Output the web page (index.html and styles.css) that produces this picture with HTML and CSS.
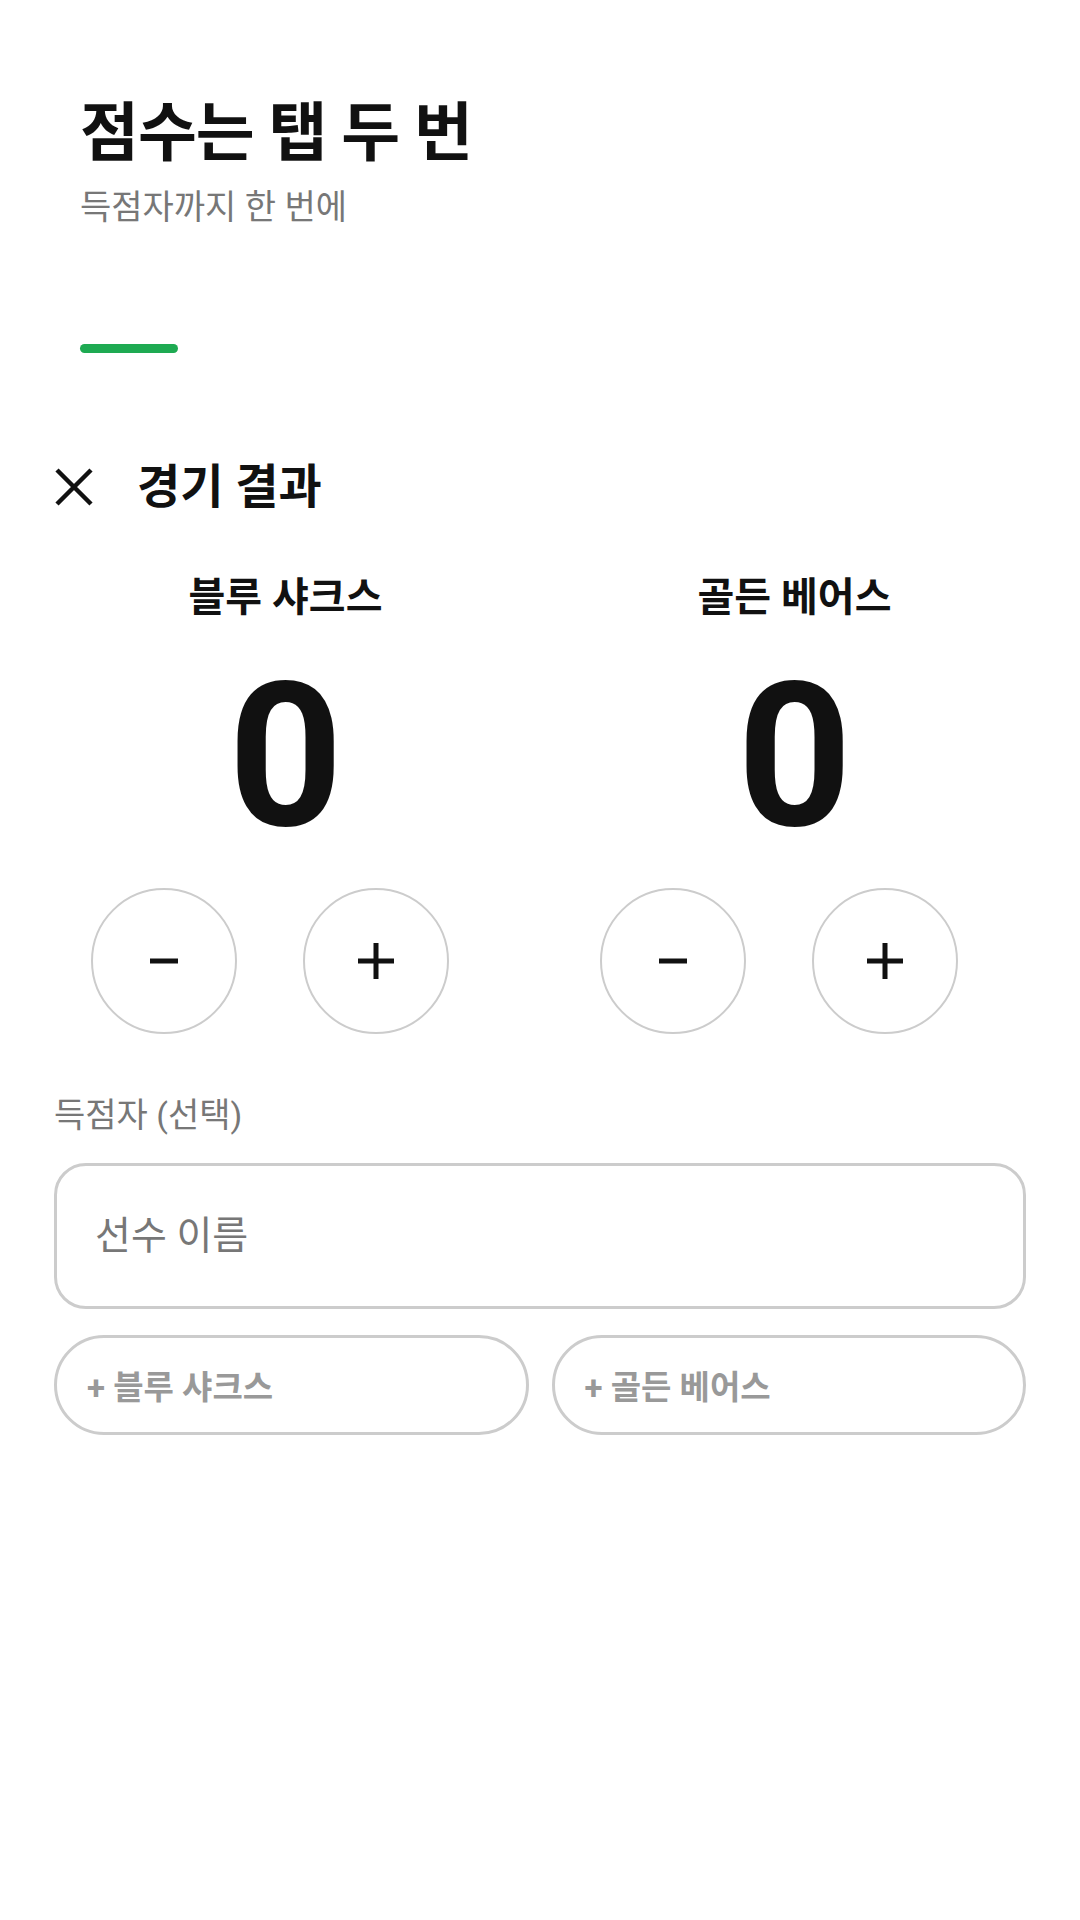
FILE: index.html
```html
<!DOCTYPE html>
<html lang="ko">

<head>
    <meta charset="UTF-8">
    <meta name="viewport" content="width=device-width, initial-scale=1.0">
    <title>점수는 탭 두 번</title>
    <link rel="stylesheet" href="styles.css">
</head>

<body>
    <div class="intro">
        <h1>점수는 탭 두 번</h1>
        <p class="sub">득점자까지 한 번에</p>
        <div class="bar"></div>
    </div>

    <div class="sheet">
        <div class="sheet-head">
            <button class="close" aria-label="닫기">
                <svg width="40" height="40" viewBox="0 0 40 40">
                    <path d="M3 3 L37 37 M37 3 L3 37" stroke="#111" stroke-width="4.5" fill="none" />
                </svg>
            </button>
            <h2>경기 결과</h2>
        </div>

        <div class="teams">
            <div class="team">
                <div class="name">블루 샤크스</div>
                <div class="score">0</div>
                <div class="btns">
                    <button class="round" aria-label="빼기">
                        <svg width="36" height="36" viewBox="0 0 36 36"><path d="M4 18 H32" stroke="#111" stroke-width="5" /></svg>
                    </button>
                    <button class="round" aria-label="더하기">
                        <svg width="36" height="36" viewBox="0 0 36 36"><path d="M0 18 H36 M18 0 V36" stroke="#111" stroke-width="5" /></svg>
                    </button>
                </div>
            </div>
            <div class="team">
                <div class="name">골든 베어스</div>
                <div class="score">0</div>
                <div class="btns">
                    <button class="round" aria-label="빼기">
                        <svg width="36" height="36" viewBox="0 0 36 36"><path d="M4 18 H32" stroke="#111" stroke-width="5" /></svg>
                    </button>
                    <button class="round" aria-label="더하기">
                        <svg width="36" height="36" viewBox="0 0 36 36"><path d="M0 18 H36 M18 0 V36" stroke="#111" stroke-width="5" /></svg>
                    </button>
                </div>
            </div>
        </div>

        <div class="label">득점자 (선택)</div>
        <input class="player" type="text" placeholder="선수 이름">
        <div class="quick">
            <button class="pill">+ 블루 샤크스</button>
            <button class="pill">+ 골든 베어스</button>
        </div>
    </div>
</body>

</html>
```

FILE: styles.css
```css
body {
    margin: 0;
    background: #fff;
    color: #111;
    font-family: Roboto, "Noto Sans CJK KR", sans-serif;
}

.intro {
    padding: 96px 80px 0;
}

h1 {
    margin: 0;
    font-size: 64px;
    font-weight: 700;
    line-height: 1.2;
    letter-spacing: -1px;
}

.sub {
    margin: 12px 0 0;
    font-size: 34px;
    color: #777;
    line-height: 1.3;
}

.bar {
    margin-top: 115px;
    width: 98px;
    height: 9px;
    border-radius: 5px;
    background: #1eaa52;
}

.sheet {
    padding: 106px 54px 0;
}

.sheet-head {
    display: flex;
    align-items: center;
    gap: 43px;
}

.close {
    border: none;
    background: none;
    padding: 0;
    width: 40px;
    height: 40px;
    display: flex;
}

h2 {
    margin: 0;
    font-size: 47px;
    font-weight: 700;
    line-height: 1.2;
}

.teams {
    display: grid;
    grid-template-columns: 1fr 1fr;
    gap: 46px;
    margin-top: 57px;
}

.team {
    display: flex;
    flex-direction: column;
    align-items: center;
}

.name {
    font-size: 40px;
    font-weight: 700;
    line-height: 1.3;
}

.score {
    font-size: 200px;
    font-weight: 700;
    line-height: 1;
    margin-top: 33px;
}

.btns {
    display: flex;
    gap: 66px;
    margin-top: 31px;
    padding-right: 32px;
}

.round {
    width: 146px;
    height: 146px;
    border-radius: 50%;
    border: 2px solid #ccc;
    background: #fff;
    padding: 0;
    display: flex;
    align-items: center;
    justify-content: center;
}

.label {
    margin-top: 59px;
    font-size: 34px;
    color: #777;
    line-height: 1.3;
}

.player {
    display: block;
    box-sizing: border-box;
    width: 100%;
    height: 146px;
    margin-top: 25px;
    padding: 0 38px;
    border: 3px solid #ccc;
    border-radius: 32px;
    font-family: inherit;
    font-size: 39px;
    color: #111;
    outline: none;
}

.player::placeholder {
    color: #777;
}

.quick {
    display: grid;
    grid-template-columns: 1fr 1fr;
    gap: 23px;
    margin-top: 26px;
}

.pill {
    height: 100px;
    border: 3px solid #ccc;
    border-radius: 50px;
    background: #fff;
    color: #999;
    font-family: inherit;
    font-size: 33px;
    font-weight: 700;
    text-align: left;
    padding: 0 30px;
}
```
